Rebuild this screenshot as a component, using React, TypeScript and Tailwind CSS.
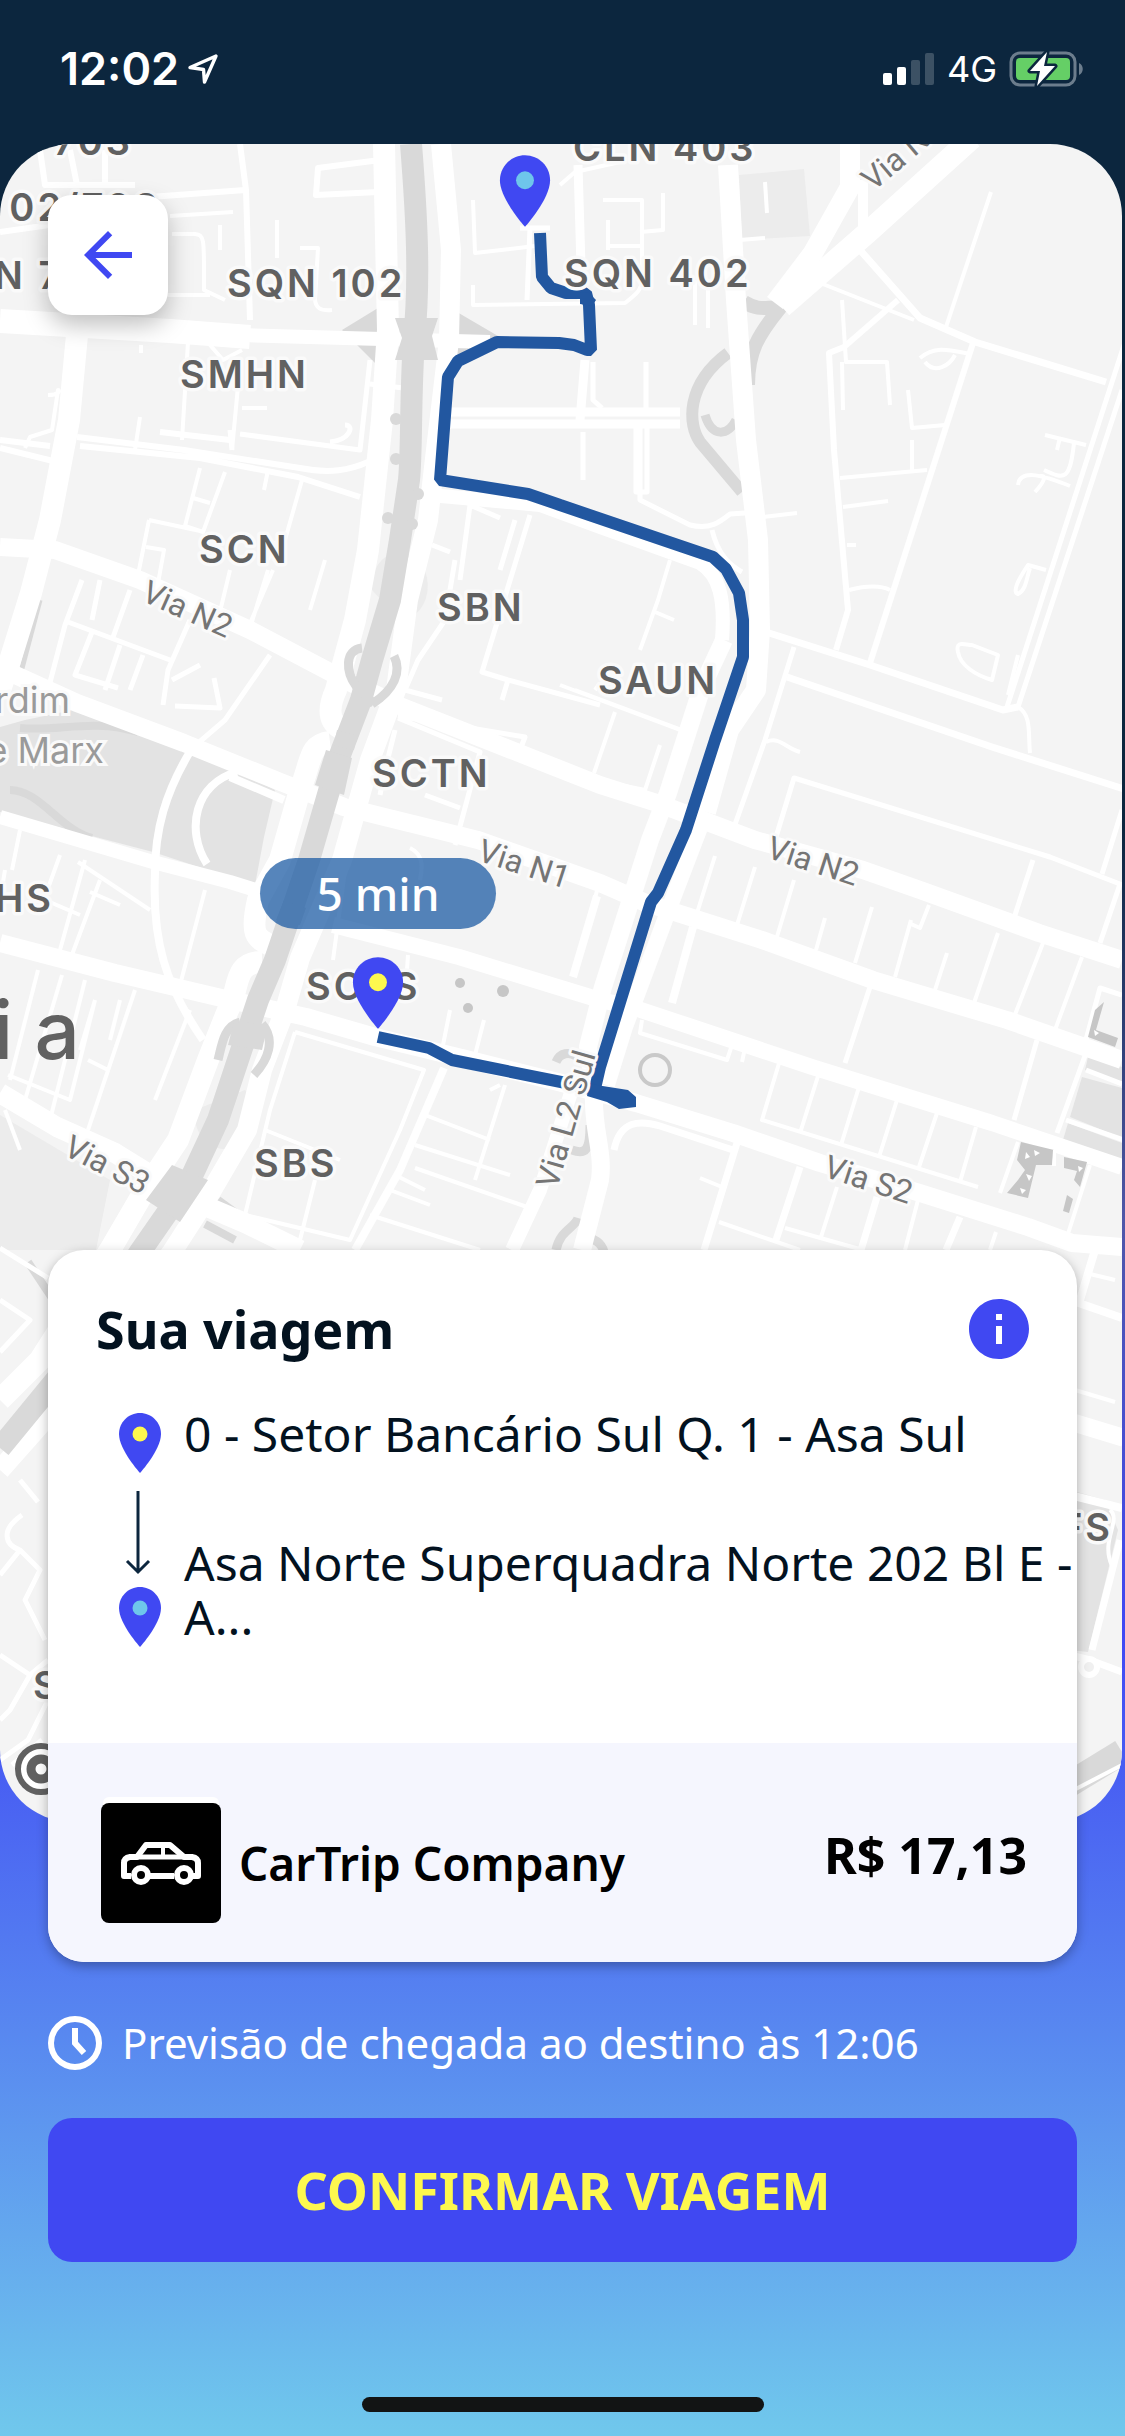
import { MdArrowBack, MdInfo } from 'react-icons/md';

type Road = { d: string; w: number };
type Label = { text: string; x: number; y: number; rotate?: number; anchor?: 'start' | 'end' };

const PARKS = [
  'M0 727 25 720 73 710 138 733 184 750 237 770 275 790 264 837 255 885 220 874 153 852 0 812Z',
  'M1088 1057 1122 1067V1083L1085 1070Z',
  'M1082 1077 1122 1088V1138L1070 1117Z',
  'M1068 1123 1122 1143V1160L1063 1140Z',
  'M1070 1490 1105 1500 1118 1530 1088 1652 1070 1650Z',
];

const PALE_BLOCKS = [
  'M739 175 804 169 810 236 742 240Z',
  'M0 1115 110 1180 96 1250 0 1250Z',
  'M372 590A28 34 0 1 1 400 620Z',
  'M195 1110A30 34 0 1 0 245 1090Z',
];

const BUILDINGS = [
  'M1021 1142 1054 1150 1052 1165 1036 1165 1028 1198 1007 1193 1018 1180 1025 1170 1017 1160Z',
  'M1064 1157 1087 1162 1080 1187 1074 1180 1077 1171 1064 1168Z',
  'M1067 1195 1073 1199 1069 1213 1063 1211Z',
  'M1104 1002 1096 1030 1118 1038 1115 1047 1088 1037 1095 1010Z',
];

// North-south axis with its loops and interchanges
const AXIS =
  'M411 144C417 220 420 280 414 340C410 400 412 450 409 480L400 540 390 600 372 660 361 700 338 760 309 860 275 960 258 1000 238 1060 218 1120 190 1180 140 1252 60 1375 0 1448';

const GRAY_ROADS: Road[] = [
  { w: 12, d: 'M728 353C685 385 688 425 700 442L742 492' },
  { w: 9, d: 'M705 415C712 438 728 436 736 420' },
  { w: 14, d: 'M744 302C760 312 768 306 780 308C758 335 748 352 748 385' },
  { w: 8, d: 'M20 728C60 732 90 718 138 732M10 790C40 790 60 830 92 838' },
  { w: 5, d: 'M40 600 21 672' },
  { w: 9, d: 'M556 1062C560 1052 570 1052 576 1056M590 1125C590 1150 586 1155 572 1150' },
  { w: 9, d: 'M556 1250C560 1230 575 1228 578 1218M584 1240C594 1236 602 1244 604 1252' },
  { w: 8, d: 'M218 1200 240 1216M205 1224 235 1240M28 1262 60 1310' },
  { w: 26, d: 'M1060 1790 1122 1752' },
];

// Ramps that pass over the axis lanes
const AXIS_RAMPS: Road[] = [
  { w: 9, d: 'M362 648C344 650 346 672 356 686L374 704M394 656C402 672 394 690 372 704' },
  { w: 9, d: 'M240 1022C224 1026 222 1044 218 1060M262 1024C276 1040 268 1060 254 1075' },
];

const ROADS: Road[] = [
  // axis lanes
  { w: 22, d: 'M384 144 388 330 382 420 368 550 355 620 336 690C326 712 330 725 345 730' },
  { w: 22, d: 'M330 742C308 745 312 760 300 790L280 860 258 900C250 935 256 938 270 945' },
  { w: 22, d: 'M262 962C232 962 240 990 228 1010L208 1060 178 1140 145 1190 110 1250 40 1360 0 1400' },
  { w: 20, d: 'M441 144 451 250 449 340 436 450 428 520 408 600 396 690 370 760 342 860 300 958 285 1010 262 1070 247 1130 212 1190 172 1252 62 1400 0 1470' },
  // east-west avenues
  { w: 24, d: 'M0 321 170 331 250 337' },
  { w: 14, d: 'M240 335 345 338 490 342' },
  { w: 18, d: 'M0 547 55 550 140 580 250 630 345 680 400 706 600 785 657 803 755 840 863 870 920 890 1039 933 1122 960' },
  { w: 18, d: 'M0 668 77 703 184 743 283 783 344 807 478 840 600 883 646 903 762 940 873 980 1007 1020 1122 1060' },
  { w: 14, d: 'M0 817 153 862 230 882 262 892' },
  { w: 16, d: 'M333 925 459 957 600 1000 632 1007 812 1067 992 1123 1122 1167' },
  { w: 18, d: 'M0 943 115 973 230 1000 306 1017 375 1037 470 1060 566 1084 636 1103 733 1133 820 1163 920 1193 1028 1227 1072 1243 1122 1247' },
  { w: 20, d: 'M0 1093 57 1127 115 1153 191 1200 245 1223 300 1250' },
  { w: 14, d: 'M430 495 540 505 600 527 700 563C720 575 725 600 722 640' },
  // west avenue
  { w: 22, d: 'M77 335 69 420 50 520 31 593 8 667 0 690' },
  // L2
  { w: 20, d: 'M728 165 736 300 746 440 758 540 760 630 756 690 729 730 706 812' },
  { w: 18, d: 'M724 640 702 687 686 737 668 793 650 840 603 987 588 1047 594 1090C592 1130 604 1150 600 1180L582 1250' },
  { w: 16, d: 'M706 812 675 893 625 1027 607 1085' },
  { w: 14, d: 'M512 1250 540 1190 575 1080' },
  // north-east avenues
  { w: 22, d: 'M972 138 867 233 782 307' },
  { w: 20, d: 'M850 140V187L813 253 775 303' },
  { w: 10, d: 'M863 180V240' },
  { w: 7, d: 'M860 250 920 318 975 342 1106 382' },
  { w: 6, d: 'M898 300 844 347 829 353 834 450 848 610 836 650M973 343 870 663' },
  { w: 5, d: 'M1124 345 1007 707M1122 390 1018 707' },
  { w: 4, d: 'M991 192 946 327M805 277 914 320M842 300 846 362 887 362 890 405M842 362 843 410' },
  { w: 4, d: 'M920 358C935 345 950 350 970 354M925 362C935 375 950 365 955 355M908 390 912 428 945 425M912 440V472M1045 435 1086 445M1060 437 1057 450M1074 443C1070 480 1065 480 1044 470M1018 485C1020 468 1045 476 1070 486M1035 492C1046 480 1046 475 1040 476' },
  { w: 4, d: 'M840 478 927 470M843 507 888 501M847 545H856M849 590C865 586 880 585 890 590M1046 570 1028 565C1018 580 1012 592 1018 594C1026 590 1026 580 1030 568' },
  { w: 4, d: 'M958 652C955 640 965 645 972 645L998 655 992 680C975 675 960 665 958 652M763 517 797 513' },
  { w: 4, d: 'M1008 695 1018 655' },
  { w: 7, d: 'M769 633 870 665 1003 710 1018 707' },
  { w: 4, d: 'M1018 707C1032 715 1028 735 1030 753M766 742C780 736 785 748 800 752' },
  { w: 7, d: 'M787 677 992 747 1124 789' },
  { w: 5, d: 'M794 647 765 740 733 830M776 837 794 778 1050 857 1120 884 1100 943M1122 810 1102 874M1033 860 1014 918' },
  // blocks between the avenues
  { w: 4, d: 'M715 856 697 913M755 867 737 925M794 880 776 940M825 918 816 950M872 907 855 963M911 920 895 977M947 953 935 990M998 933 974 1003M1043 943 1014 1017M1082 957 1055 1030M929 905 920 928 911 924' },
  { w: 8, d: 'M693 927 672 1003M597 896 573 977' },
  { w: 5, d: 'M870 987 845 1063M1037 1040 1014 1120M1086 1053 1057 1133M1122 995 1100 988 1086 1040M1086 1070 1122 1084M1066 1120 1124 1140' },
  { w: 4, d: 'M780 1060 762 1120 978 1187M819 1073 801 1130M859 1087 841 1145M897 1100 879 1157M937 1113 919 1167M976 1127 960 1182M642 1020 640 1033 727 1060 732 1045M745 1048 742 1062M1018 1142 1000 1193M1090 1165 1066 1240' },
  { w: 7, d: 'M737 1143 704 1250M800 1167 776 1240M877 1197 861 1250M960 1217 946 1250M614 1150C620 1120 640 1120 660 1126L733 1150' },
  { w: 4, d: 'M837 1187 821 1237M918 1200 905 1250M996 1232 990 1250M719 1222 800 1250M785 1228 863 1250M700 1178 722 1187' },
  // quarter north of the route
  { w: 9, d: 'M578 165 582 300M585 360 580 420M450 424 680 424M450 412 680 412' },
  { w: 4, d: 'M473 200 475 253 535 246M603 200H642V285M663 193V230L640 232M608 220V250M610 246H640M473 285V305L625 303C635 295 642 290 642 280M663 195V230M695 280V325M708 290V328M765 182 767 213M740 240 765 238M560 185 575 172 620 162' },
  { w: 5, d: 'M520 228H550M530 228 527 300M646 362V410M593 362V400L602 408M583 432V480M640 425V500L690 525C710 530 720 522 730 514L745 513M636 428V492H647V428M712 530C718 555 730 565 742 572' },
  // quarters west of the axis
  { w: 6, d: 'M40 150 45 185H135M70 150 77 185M105 150V185M240 144 246 190 250 320M150 197 245 190M0 232 120 215M380 160 318 168 316 195 378 192' },
  { w: 4, d: 'M170 216 233 212M172 234H195C205 235 204 240 204 290L225 300M220 225V250M277 220V258M300 248H318L315 300C316 308 320 311 332 310M168 295H210M141 345V353M188 342 182 440M210 345 223 360 242 350M240 365 232 450M242 408H267M140 417 135 450M48 395C60 395 60 390 58 390L52 430 30 437 25 448' },
  { w: 6, d: 'M0 448 57 462M0 440 50 446M77 437 184 450 300 468C330 474 350 470 368 462M80 446 200 458 298 477 360 497M160 432 230 440' },
  { w: 5, d: 'M232 450 230 430M240 434 360 450 370 360M370 384 420 390M345 425C355 425 350 440 330 442' },
  { w: 4, d: 'M200 468 185 526 203 532 225 472M193 498 210 503M302 480 285 540 272 544 268 560M149 520 138 575M149 520 205 532M146 547 164 550 155 600M230 570 218 620M273 570 248 628M268 570 250 628M325 560 310 610M268 470 264 490' },
  { w: 5, d: 'M68 622 170 660M82 580 65 625 48 690M100 580 92 620M130 590 112 640M190 620 168 670 163 705M92 632 75 675 118 688M120 645 105 690M143 655 130 690M172 680 200 665M214 678 220 708 175 706M270 655 225 720 190 750' },
  { w: 8, d: 'M191 750C165 793 155 830 155 873C152 940 165 985 203 1040' },
  { w: 8, d: 'M237 772C195 783 185 830 207 864M230 777 284 800' },
  { w: 4, d: 'M20 830 12 870M60 855 42 905M85 860 60 950M100 880 70 960M78 862 150 910M45 900 80 915M90 892 120 905M205 890 180 985M5 870 0 900' },
  { w: 4, d: 'M38 970 10 1080M62 975 25 1100M85 980 50 1120M135 990 88 1130M95 1000 80 1050M120 1000 110 1040M8 1075 70 1100 95 1000M5 1110 20 1150M190 1010 155 1100M88 1060 108 1070' },
  // quarters east of the axis
  { w: 5, d: 'M455 560 445 620 418 660 405 690 442 700M460 580 470 505 500 518M530 515 482 672 508 680 600 705M515 520 500 570M432 545 450 552M508 680 502 700M398 716 525 737 520 750M395 730 385 770 380 795M398 718 480 752 455 845M425 795 460 808' },
  { w: 4, d: 'M560 685 680 730M575 690 690 733M615 712 594 773M660 745 645 790 620 785M670 560 658 600 640 650M655 612 674 620M595 690 600 683M410 848C425 855 422 870 420 880M345 870 333 960M600 880 575 970' },
  { w: 4, d: 'M295 1032 424 1070 400 1130 350 1240 245 1215 270 1110 295 1032M265 1130 340 1160M315 1180 300 1240M450 1010 442 1050M484 1020 475 1055M408 955 405 1000M415 1145 510 1175M505 1085 475 1180M490 1090 500 1085M425 1115 490 1140M390 1190 430 1205M395 1175 425 1190M415 1168 530 1208M370 1215 480 1250' },
  { w: 8, d: 'M444 1068 400 1170 355 1250' },
  // strips beside the card
  { w: 5, d: 'M0 1300 30 1320 0 1352M0 1248 48 1278M22 1515C0 1530 5 1545 20 1550L40 1570 25 1600 45 1640M20 1550 0 1575M0 1655 30 1675 10 1710 0 1720M30 1675 48 1660M20 1480 38 1502M48 1700 28 1740 0 1760M42 1740 12 1765' },
  { w: 8, d: 'M1095 1250 1080 1300M1070 1300 1122 1318M1070 1495 1122 1508' },
  { w: 18, d: 'M1065 1420 1124 1438' },
  { w: 7, d: 'M1120 1540 1092 1650M1070 1655 1090 1660 1122 1672' },
  { w: 4, d: 'M1090 1274 1115 1280M1075 1390 1115 1402M1110 1510C1122 1520 1100 1540 1112 1566M1070 1792 1122 1765' },
];

const ROUTE =
  'M540 233 542 277 551 288 566 293 586 293 589 305 591 350 587 350 574 345 559 343 497 342 458 361 448 377 440 480 528 494 560 505 713 557 726 569 739 593 743 620V657L715 740 686 830 658 893 651 902 600 1067 594 1093';
const ROUTE_START = 'M378 1037 429 1048 452 1060 566 1083 594 1090';
const ROUTE_TURN = 'M590 1084 628 1090 636 1097V1107L619 1109 607 1102 587 1096ZM580 293 588 292 596 300 592 306 580 304Z';

const DISTRICTS: Label[] = [
  { text: '703', x: 133, y: 155, anchor: 'end' },
  { text: '02/703', x: 161, y: 221, anchor: 'end' },
  { text: 'SQN 702', x: -66, y: 289 },
  { text: 'SQN 102', x: 227, y: 297 },
  { text: 'SMHN', x: 180, y: 388 },
  { text: 'CLN 403', x: 573, y: 161 },
  { text: 'SQN 402', x: 564, y: 287 },
  { text: 'SCN', x: 199, y: 563 },
  { text: 'SBN', x: 437, y: 621 },
  { text: 'SAUN', x: 598, y: 694 },
  { text: 'SCTN', x: 372, y: 787 },
  { text: 'HS', x: 54, y: 912, anchor: 'end' },
  { text: 'SCTS', x: 306, y: 1000 },
  { text: 'SBS', x: 254, y: 1177 },
  { text: 'FS', x: 1113, y: 1541, anchor: 'end' },
  { text: 'S', x: 33, y: 1699 },
];

const STREETS: Label[] = [
  { text: 'Via N3', x: 873, y: 192, rotate: -40 },
  { text: 'Via N2', x: 140, y: 600, rotate: 24 },
  { text: 'Via N1', x: 476, y: 860, rotate: 18 },
  { text: 'Via N2', x: 765, y: 857, rotate: 18 },
  { text: 'Via S3', x: 62, y: 1154, rotate: 27 },
  { text: 'Via S2', x: 822, y: 1176, rotate: 18 },
  { text: 'Via L2 Sul', x: 557, y: 1190, rotate: -74 },
];

const stops = ['0 - Setor Bancário Sul Q. 1 - Asa Sul', 'Asa Norte Superquadra Norte 202 Bl E - A...'];

function Pin({ dot, className }: { dot: string; className: string }) {
  return (
    <svg viewBox="0 0 24 24" className={className} aria-hidden="true">
      <path d="M12 2C8.13 2 5 5.13 5 9c0 5.25 7 13 7 13s7-7.75 7-13c0-3.87-3.13-7-7-7z" fill="#4048f2" />
      <circle cx="12" cy="9" r="2.5" fill={dot} />
    </svg>
  );
}

function StatusBar() {
  return (
    <header className="flex h-36 items-start justify-between pt-11 pr-10 pl-[60px] font-['Inter',sans-serif] text-white">
      <div className="flex h-[50px] items-center gap-2">
        <span className="text-[45px] leading-[50px] font-semibold">12:02</span>
        <svg viewBox="0 0 32 32" className="size-8" fill="none" stroke="white" strokeWidth="3.4" strokeLinejoin="round">
          <path d="M29 3 3 14.500 16.500 16.500 17.500 29Z" />
        </svg>
      </div>
      <div className="flex h-[50px] items-center gap-3">
        <svg viewBox="0 0 52 34" className="h-[34px] w-[52px]" fill="white">
          <rect x="0" y="21" width="9" height="12" rx="2" />
          <rect x="14" y="15" width="9" height="18" rx="2" />
          <rect x="28" y="8" width="9" height="25" rx="2" opacity=".2" />
          <rect x="42" y="1" width="9" height="32" rx="2" opacity=".2" />
        </svg>
        <span className="text-[36px] leading-[50px]">4G</span>
        <svg viewBox="0 0 76 36" className="h-9 w-[76px]" fill="none">
          <rect x="2" y="2" width="64" height="32" rx="9" stroke="#6c7d8d" strokeWidth="3" />
          <path d="M70 12c5 2 5 10 0 12z" fill="#6c7d8d" />
          <rect x="7" y="7" width="54" height="22" rx="4" fill="#65cf66" />
          <path d="M38 1 21 20h10l-3 15 18-20H35z" fill="white" stroke="#0c263e" strokeWidth="5" strokeLinejoin="round" />
          <path d="M38 1 21 20h10l-3 15 18-20H35z" fill="white" />
        </svg>
      </div>
    </header>
  );
}

function CityMap() {
  return (
    <svg
      viewBox="0 144 1122 1678"
      preserveAspectRatio="xMidYMin slice"
      className="block size-full bg-[#f4f4f4] font-['Inter',sans-serif]"
      role="img"
      aria-label="Mapa da viagem"
    >
      <g fill="#ececec">
        {PALE_BLOCKS.map((d) => (
          <path key={d} d={d} />
        ))}
      </g>
      <g fill="#e3e3e3">
        {PARKS.map((d) => (
          <path key={d} d={d} />
        ))}
      </g>
      <path d="M342 330 378 308V366ZM457 312 498 336 457 362Z" fill="#d9d9d9" />
      <g fill="none" stroke="#d9d9d9">
        {GRAY_ROADS.map(({ d, w }) => (
          <path key={d} d={d} strokeWidth={w} />
        ))}
      </g>
      <g fill="none" stroke="white" strokeLinejoin="round">
        {ROADS.map(({ d, w }) => (
          <path key={d} d={d} strokeWidth={w} />
        ))}
      </g>
      <g fill="none" stroke="#d9d9d9">
        <path d={AXIS} strokeWidth="22" />
        {AXIS_RAMPS.map(({ d, w }) => (
          <path key={d} d={d} strokeWidth={w} />
        ))}
      </g>
      <g fill="#d9d9d9">
        <path d="M395 318 438 318 432 336 438 360 395 360 402 338Z" />
        <path d="M326 750 352 758 344 795 315 785ZM337 730 357 735 354 750 334 745ZM172 1165 208 1180 180 1222 146 1200ZM284 900 306 908 300 925 276 920ZM234 1022 268 1024 262 1050 228 1045Z" />
        <circle cx="396" cy="419" r="6" />
        <circle cx="396" cy="459" r="6" />
        <circle cx="418" cy="494" r="6" />
        <circle cx="388" cy="518" r="6" />
        <circle cx="412" cy="524" r="6" />
      </g>
      <circle cx="1089" cy="1667" r="8" fill="#f0f0f0" stroke="white" strokeWidth="6" />
      <g fill="#c6c6c6">
        {BUILDINGS.map((d) => (
          <path key={d} d={d} />
        ))}
        <circle cx="460" cy="983" r="5" />
        <circle cx="503" cy="991" r="6" />
        <circle cx="468" cy="1008" r="5" />
      </g>
      <g fill="white">
        <path d="M1053 1150h3v16h-4zM1026 1152l4 5-5 2zM1034 1150l6 3-5 3zM1026 1174l6 2-3 5zM1020 1188l6 2-4 4zM1078 1166l5 2-4 4zM1094 1030l5 3-4 3z" />
      </g>
      <circle cx="655" cy="1070" r="15" fill="none" stroke="#c9c9c9" strokeWidth="4" />

      <g fill="none" stroke="#2257a0" strokeWidth="12" strokeLinejoin="bevel">
        <path d={ROUTE} />
        <path d={ROUTE_START} />
      </g>
      <path d={ROUTE_TURN} fill="#2257a0" />

      <g className="text-[38px] font-semibold tracking-[3px]" fill="#616161" stroke="#fafafa" strokeWidth="7" paintOrder="stroke" strokeLinejoin="round">
        {DISTRICTS.map(({ text, x, y, anchor }) => (
          <text key={text} x={x} y={y} textAnchor={anchor}>
            {text}
          </text>
        ))}
      </g>
      <g className="font-['Roboto',sans-serif] text-[32px]" fill="#757575" stroke="#fafafa" strokeWidth="6" paintOrder="stroke" strokeLinejoin="round">
        {STREETS.map(({ text, x, y, rotate }) => (
          <text key={`${text}-${x}`} transform={`translate(${x} ${y}) rotate(${rotate})`}>
            {text}
          </text>
        ))}
      </g>
      <g className="text-[36px]" fill="#9a9a9a" stroke="#fafafa" strokeWidth="6" paintOrder="stroke" textAnchor="end">
        <text x="70" y="713">rdim</text>
        <text x="104" y="763">e Marx</text>
      </g>
      <text x="80" y="1059" textAnchor="end" className="text-[80px] font-medium" fill="#616161">
        i a
      </text>
      <g fill="white" stroke="#616161">
        <circle cx="41" cy="1769" r="23" strokeWidth="6" />
        <circle cx="41" cy="1769" r="10" strokeWidth="9" />
      </g>
    </svg>
  );
}

function CarLogo() {
  return (
    <span className="flex size-[120px] items-center justify-center rounded-lg bg-black shadow-[0_-8px_0_-2px_white]">
      <svg viewBox="0 0 82 44" className="h-11 w-[82px]" fill="none" stroke="white" strokeWidth="6" strokeLinejoin="round">
        <path d="M11 35H4V22q0-5 6-6H17L26 4H50L64 16H72q6 1 6 6V35H73M30 35H54" />
        <path d="M17 16H64" strokeWidth="5" />
        <path d="M43 4V16" strokeWidth="4" />
        <circle cx="21" cy="34" r="7" />
        <circle cx="64" cy="34" r="7" />
      </svg>
    </span>
  );
}

function TripCard() {
  return (
    <section className="relative mx-12 -mt-[572px] overflow-hidden rounded-[36px] bg-white text-[#03121f] shadow-[0_4px_12px_rgba(0,0,0,0.3)]">
      <div className="flex items-center justify-between pt-[43px] pr-[42px] pl-12">
        <h1 className="text-[52px] leading-[72px] font-bold">Sua viagem</h1>
        <button type="button" aria-label="Informações" className="text-[#4048f2]">
          <MdInfo className="size-[72px]" />
        </button>
      </div>

      <div className="mt-[42px] flex gap-2 pb-[90px] pl-14">
        <div className="flex shrink-0 flex-col items-center">
          <Pin dot="#fdf84e" className="size-[72px]" />
          <svg viewBox="0 0 28 84" className="mt-3 mr-1 mb-[6px] h-[84px] w-7" fill="none" stroke="#0c263e" strokeWidth="3">
            <path d="M14 0V81M3 70 14 81 25 70" />
          </svg>
          <Pin dot="#6ec6eb" className="size-[72px]" />
        </div>
        <div className="flex flex-col gap-[75px] text-[48px] leading-[54px]">
          {stops.map((stop) => (
            <p key={stop}>{stop}</p>
          ))}
        </div>
      </div>

      <div className="flex items-center justify-between bg-[#f5f6fe] pt-[60px] pr-[50px] pb-[39px] pl-[53px] text-black">
        <div className="flex items-center gap-[18px]">
          <CarLogo />
          <span className="text-[46px] leading-[54px] font-semibold">CarTrip Company</span>
        </div>
        <span className="mb-4 text-[50px] leading-[54px] font-bold">R$ 17,13</span>
      </div>
    </section>
  );
}

export default function App() {
  return (
    <main className="flex min-h-screen flex-col bg-[linear-gradient(180deg,#0c263e_0%,#0c263e_34%,#4f57a8_50%,#4048f4_67%,#70c8ec_100%)] font-['Noto_Sans',sans-serif]">
      <StatusBar />

      <div className="relative mr-[3px] h-[1678px] overflow-hidden rounded-[72px]">
        <CityMap />
        <button
          type="button"
          aria-label="Voltar"
          className="absolute top-[51px] left-12 flex size-[120px] items-center justify-center rounded-3xl bg-white text-[#4048f2] shadow-[0_10px_24px_rgba(0,0,0,0.25)]"
        >
          <MdArrowBack className="size-[72px]" />
        </button>
        <Pin dot="#6ec6eb" className="absolute top-1 left-[482px] size-[86px]" />
        <Pin dot="#fdf84e" className="absolute top-[806px] left-[335px] size-[86px]" />
        <span className="absolute top-[714px] left-[260px] flex h-[71px] w-[236px] items-center justify-center rounded-full bg-[#1e5ca4]/75 text-[46px] font-medium text-white">
          5 min
        </span>
      </div>

      <TripCard />

      <div className="mx-12 mt-[54px] flex items-center gap-5 text-white">
        <svg viewBox="0 0 54 54" className="size-[54px]" fill="none" stroke="white" strokeWidth="6">
          <circle cx="27" cy="27" r="24" />
          <path d="M27 12V27L36 37" />
        </svg>
        <p className="text-[42px] leading-[54px]">Previsão de chegada ao destino às 12:06</p>
      </div>

      <button type="button" className="mx-12 mt-12 h-36 rounded-3xl bg-[#4048f2] text-[52px] font-bold text-[#fdf84e]">
        CONFIRMAR VIAGEM
      </button>

      <div className="mx-auto mt-auto mb-6 h-[15px] w-[402px] rounded-full bg-[#121414]" />
    </main>
  );
}
